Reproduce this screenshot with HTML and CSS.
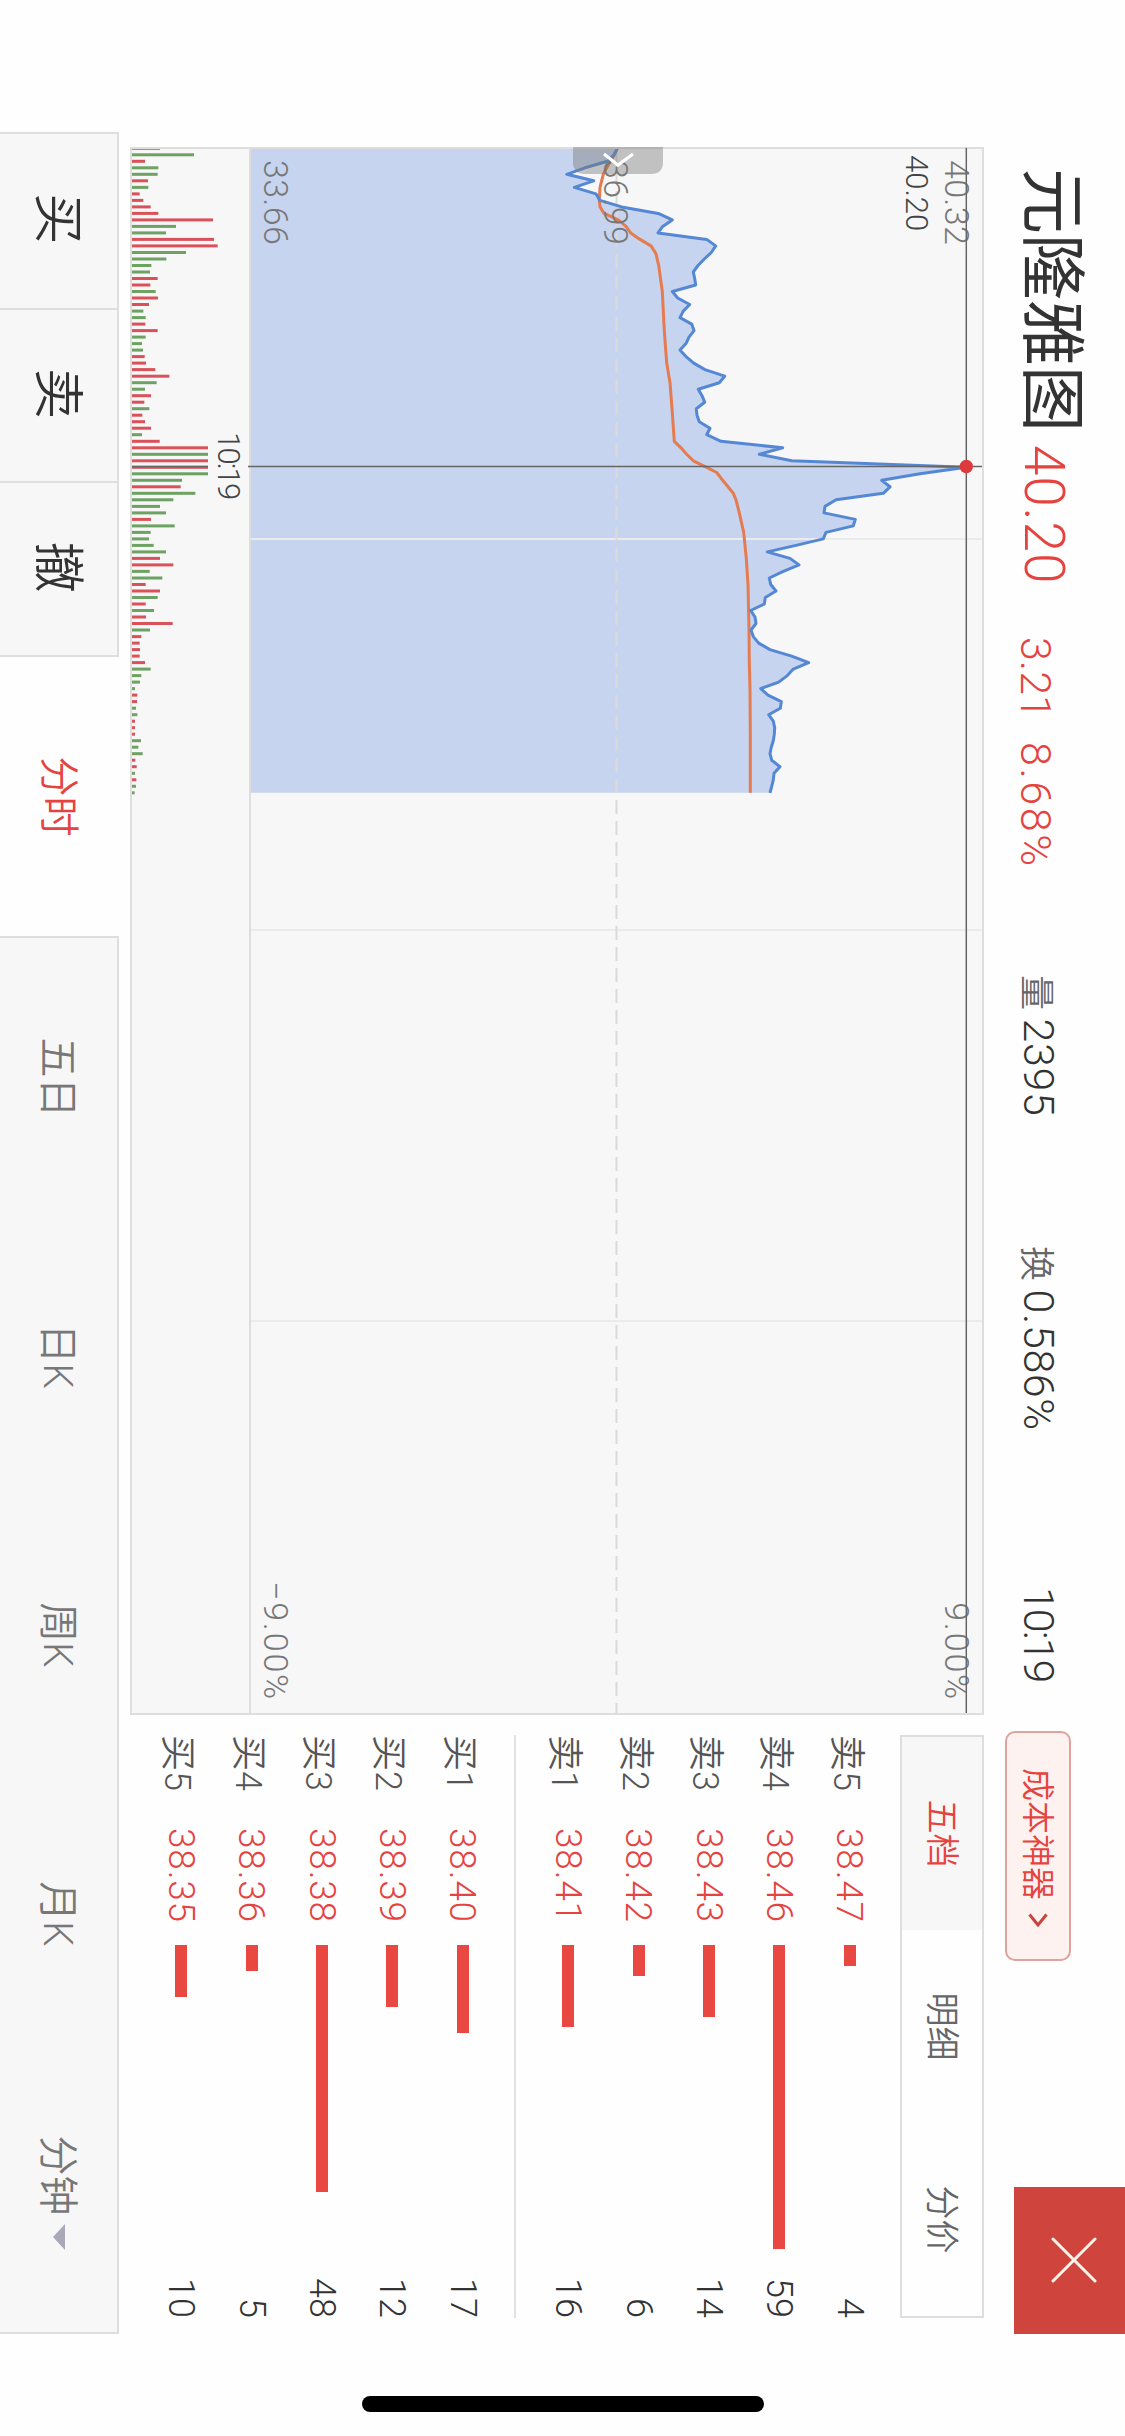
FILE: index.html
```html
<!DOCTYPE html>
<html lang="zh-CN">
<head>
    <meta charset="UTF-8">
    <meta name="viewport" content="width=device-width, initial-scale=1.0">
    <title>元隆雅图 分时</title>
    <link rel="stylesheet" href="styles.css">
</head>
<body>
    <div class="screen">
        <div class="landscape">
            <header class="quote">
                <h1 class="name">元隆雅图</h1>
                <div class="price">40.20</div>
                <div class="change">3.21</div>
                <div class="change percent">8.68%</div>
                <div class="stat"><span>量</span>2395</div>
                <div class="stat"><span>换</span>0.586%</div>
                <div class="stat time">10:19</div>
                <button class="cost-btn">成本神器
                    <svg width="14" height="20" viewBox="0 0 14 20"><path d="M1.5 1.5 L12 10 L1.5 18.5"/></svg>
                </button>
                <button class="close-btn">
                    <svg width="46" height="46" viewBox="0 0 46 46"><path d="M2 2 L44 44 M44 2 L2 44"/></svg>
                </button>
            </header>

            <main class="main">
                <svg class="chart" width="1568" height="855" viewBox="0 0 1568 855">
                    <rect class="chart-bg" x="1" y="1" width="1566" height="853"/>
                    <path id="area" class="area"/>
                    <path class="grid" d="M392 2 V733 M783 2 V733 M1174 2 V733"/>
                    <path class="mid" d="M2 367.5 H1566"/>
                    <path class="frame" d="M1 734 H1567"/>
                    <g id="volume"></g>
                    <path id="avg" class="avg"/>
                    <path id="line" class="line"/>
                    <rect class="frame" x="1" y="1" width="1566" height="852"/>

                    <text class="axis" x="13" y="39">40.32</text>
                    <text class="axis" x="13" y="380">36.99</text>
                    <text class="axis" x="13" y="720">33.66</text>
                    <text class="axis end" x="1554" y="39">9.00%</text>
                    <text class="axis end" x="1554" y="720">−9.00%</text>

                    <path class="cross" d="M1 17.7 H1566 M319.5 2 V852"/>
                    <circle class="dot" cx="319.5" cy="17.7" r="6.7"/>
                    <rect class="chart-bg" x="285" y="736" width="70" height="40"/>
                    <text class="tip" x="8" y="78">40.20</text>
                    <text class="tip time" x="285" y="766">10:19</text>

                    <path class="handle" d="M0 321 H15 Q27 321 27 333 V399 Q27 411 15 411 H0 Z"/>
                    <path class="handle-arrow" d="M7 351 L18 366 L7 380"/>
                </svg>

                <section class="panel">
                    <div class="panel-tabs">
                        <span class="active">五档</span>
                        <span>明细</span>
                        <span>分价</span>
                    </div>
                    <ul class="orders" id="sell"></ul>
                    <ul class="orders buy" id="buy"></ul>
                </section>

                <div class="home"></div>
            </main>

            <nav class="bottom">
                <div class="trade">
                    <button>买</button>
                    <button>卖</button>
                    <button>撤</button>
                </div>
                <div class="tab active">分时</div>
                <div class="periods">
                    <div class="tab">五日</div>
                    <div class="tab">日K</div>
                    <div class="tab">周K</div>
                    <div class="tab">月K</div>
                    <div class="tab">分钟<i class="caret"></i></div>
                </div>
            </nav>
        </div>
    </div>

    <script src="script.js"></script>
</body>
</html>
```

FILE: styles.css
```css
:root {
    --red: #e5433f;
    --text: #333;
    --gray: #777;
    --border: #dedede;
    --panel-bg: #f7f7f7;
}

* {
    box-sizing: border-box;
    margin: 0;
    padding: 0;
}

body {
    background: #fefefe;
    color: var(--text);
    font-family: Roboto, "Noto Sans CJK SC", sans-serif;
    font-weight: 350;
}

button {
    font: inherit;
    border: none;
    background: none;
}

.screen {
    width: 1125px;
    height: 2436px;
    overflow: hidden;
}

/* the whole page is shown in landscape */
.landscape {
    width: 2436px;
    height: 1125px;
    transform-origin: 0 0;
    transform: translateX(1125px) rotate(90deg);
    display: flex;
    flex-direction: column;
}

/* header */
.quote {
    height: 141px;
    padding-left: 168px;
    display: grid;
    grid-template-columns: 277px 192px 105px 233px 271px 341px 144px 456px 147px;
    align-items: start;
    line-height: 60px;
    white-space: nowrap;
}

.name {
    font-size: 66px;
    font-weight: 400;
    line-height: 66px;
    padding-top: 41px;
}

.price {
    padding-top: 51px;
    font-size: 55px;
    letter-spacing: 0.8px;
    color: var(--red);
}

.change {
    padding-top: 59px;
    font-size: 43px;
    color: var(--red);
}

.percent {
    letter-spacing: 2.6px;
}

.stat {
    padding-top: 56px;
    font-size: 43px;
    letter-spacing: 0.6px;
}

.stat span {
    font-size: 35px;
    color: #666;
    margin-right: 8px;
}

.stat.time {
    letter-spacing: -2px;
}

.cost-btn {
    width: 230px;
    height: 66px;
    margin-top: 54px;
    padding-left: 3px;
    border: 2px solid #dfa29d;
    border-radius: 10px;
    background: #fdf2ef;
    color: var(--red);
    font-size: 33px;
    line-height: 1;
    display: flex;
    align-items: center;
    justify-content: center;
    gap: 13px;
}

.cost-btn svg {
    fill: none;
    stroke: #c9443e;
    stroke-width: 3;
}

.close-btn {
    height: 111px;
    background: #cf453e;
    display: flex;
    align-items: center;
    justify-content: center;
    padding-right: 2px;
    padding-bottom: 10px;
}

.close-btn svg {
    fill: none;
    stroke: #fff4ea;
    stroke-width: 3;
    stroke-linecap: round;
}

/* chart */
.main {
    height: 865px;
    padding-left: 147px;
    display: flex;
}

.chart {
    flex: none;
    display: block;
}

.chart-bg {
    fill: var(--panel-bg);
}

.frame {
    fill: none;
    stroke: var(--border);
    stroke-width: 2;
}

.grid {
    stroke: #ebebeb;
    stroke-width: 2;
}

.mid {
    stroke: #dadada;
    stroke-width: 2;
    stroke-dasharray: 14 7;
}

.area {
    fill: #c6d4f0;
}

.line,
.avg {
    fill: none;
    stroke: #5588d4;
    stroke-width: 3;
    stroke-linejoin: round;
}

.avg {
    stroke: #e57b4f;
}

.up {
    fill: #d9525a;
}

.down {
    fill: #6da263;
}

.axis {
    font-size: 34px;
    font-weight: 300;
    letter-spacing: 0.3px;
    fill: #777;
}

.axis.end {
    text-anchor: end;
    letter-spacing: 1.8px;
}

.tip {
    font-size: 31px;
    fill: #444;
}

.tip.time {
    letter-spacing: -1.8px;
}

.cross {
    fill: none;
    stroke: #666;
    stroke-width: 1.5;
}

.dot {
    fill: #dc3a3c;
}

.handle {
    fill: rgba(120, 120, 120, 0.42);
}

.handle-arrow {
    fill: none;
    stroke: #fff;
    stroke-width: 3;
}

/* order book */
.panel {
    width: 583px;
    margin-left: 20px;
}

.panel-tabs {
    height: 84px;
    border: 2px solid var(--border);
    display: grid;
    grid-template-columns: repeat(3, 1fr);
    font-size: 34px;
    line-height: 80px;
    text-align: center;
    color: #666;
}

.panel-tabs .active {
    background: var(--panel-bg);
    color: var(--red);
}

.orders {
    list-style: none;
    padding: 15px 0 17px;
}

.buy {
    border-top: 2px solid #e2e2e2;
    padding-top: 16px;
}

.orders li {
    height: 70.4px;
    display: grid;
    grid-template-columns: 93px 117px 1fr 60px;
    align-items: center;
    font-size: 36px;
    white-space: nowrap;
}

.side {
    color: #555;
}

.cost {
    font-size: 37px;
    letter-spacing: 0.8px;
    color: var(--red);
}

.bar {
    height: 12px;
    background: #e84742;
}

.count {
    text-align: right;
}

.home {
    width: 16px;
    height: 402px;
    margin-left: 78px;
    margin-top: 220px;
    border-radius: 8px;
    background: #000;
}

/* bottom bar */
.bottom {
    height: 119px;
    padding-left: 132px;
    display: flex;
}

.trade {
    width: 525px;
    display: grid;
    grid-template-columns: repeat(3, 1fr);
    background: var(--panel-bg);
    border: 2px solid var(--border);
    border-bottom: none;
}

.trade button {
    font-size: 51px;
    color: var(--text);
    padding: 0 4px 8px 0;
}

.trade button + button {
    border-left: 2px solid var(--border);
}

.tab {
    width: 279px;
    display: flex;
    align-items: center;
    justify-content: center;
    padding-bottom: 6px;
    font-size: 40px;
    color: var(--gray);
}

.tab.active {
    color: var(--red);
}

.periods {
    width: 1398px;
    display: flex;
    background: var(--panel-bg);
    border: 2px solid var(--border);
    border-bottom: none;
}

.caret {
    margin-left: 8px;
    margin-top: 5px;
    border: 13px solid transparent;
    border-top: 12px solid #a9a9b9;
    border-bottom: none;
}
```

FILE: script.js
```javascript
const STEP = 6.51;
const LEFT = 1.3;
const BASE = 734;
const VOL_BASE = 852;

// price per minute, as height above the bottom of the price area (x3)
const prices = [
    1102, 1092, 1073, 1005, 950, 1031, 973, 1038, 1050, 1115, 1225, 1267, 1238, 1224, 1370, 1397,
    1384, 1363, 1344, 1330, 1334, 1337, 1267, 1283, 1319, 1300, 1290, 1325, 1332, 1317, 1308, 1290,
    1308, 1331, 1365, 1424, 1408, 1345, 1356, 1364, 1339, 1341, 1348, 1380, 1370, 1413, 1598, 1528,
    1625, 2149, 2010, 1895, 1920, 1900, 1758, 1725, 1722, 1816, 1810, 1728, 1720, 1638, 1552, 1620,
    1647, 1600, 1558, 1562, 1578, 1546, 1543, 1502, 1515, 1518, 1503, 1510, 1526, 1560, 1625, 1676,
    1630, 1612, 1586, 1532, 1554, 1594, 1591, 1556, 1570, 1574, 1573, 1570, 1564, 1560, 1565, 1590,
    1572, 1570, 1565, 1560
];

// average price: [minute, height x3]
const average = [
    [0, 1102], [1.3, 1090], [3, 1070], [4, 1060], [6, 1050], [8, 1048], [9, 1050], [10, 1062],
    [11, 1105], [12, 1128], [13, 1142], [14, 1170], [15, 1203], [16.2, 1218], [18, 1226], [22, 1237],
    [28, 1243], [33, 1250], [36, 1260], [40, 1266], [45, 1273], [46, 1293], [47, 1310], [48, 1330],
    [49, 1370], [49.8, 1400], [51, 1418], [53, 1450], [54, 1458], [56, 1468], [59, 1481], [63, 1489],
    [67, 1494], [74, 1497], [79, 1498], [83, 1500], [90, 1501], [99, 1501]
];

const volumes = ('r84 g186 r39 g79 g77 r48 g49 r23 r34 r56 r79 r243 g132 g102 r246 r257 g162 g103 g58 g54 ' +
    'r77 r55 g71 r78 r51 g34 g41 r40 r77 g41 g30 g33 r38 r42 r70 r112 g74 g39 r57 r37 ' +
    'g52 r31 r39 r57 g30 r83 r240 g240 r240 r240 g240 g150 r146 g190 g124 g84 g102 r57 g128 g56 ' +
    'g51 g65 g102 r84 r124 g53 g91 r41 r84 g77 r41 g66 r42 r122 g54 r28 r23 r24 r23 r39 ' +
    'g56 g28 g24 g9 r16 r15 g12 g16 r9 r9 r9 g27 g19 g32 r10 r14 g9 r13 g12 g8').split(' ');

const sell = [['卖5', '38.47', 4], ['卖4', '38.46', 59], ['卖3', '38.43', 14], ['卖2', '38.42', 6], ['卖1', '38.41', 16]];
const buy = [['买1', '38.40', 17], ['买2', '38.39', 12], ['买3', '38.38', 48], ['买4', '38.36', 5], ['买5', '38.35', 10]];

function point(i, h) {
    return (LEFT + i * STEP).toFixed(1) + ' ' + (BASE - h / 3).toFixed(1);
}

const linePath = 'M' + prices.map((h, i) => point(i, h)).join(' L');
document.getElementById('line').setAttribute('d', linePath);
document.getElementById('area').setAttribute('d', linePath + ' V' + BASE + ' H' + LEFT + ' Z');
document.getElementById('avg').setAttribute('d', 'M' + average.map(p => point(p[0], p[1])).join(' L'));

document.getElementById('volume').innerHTML = volumes.map((v, i) => {
    const h = v.slice(1) / 3;
    const x = LEFT + i * STEP - 1.5;
    return `<rect class="${v[0] === 'r' ? 'up' : 'down'}" x="${x.toFixed(1)}" y="${VOL_BASE - h}" width="3" height="${h}"/>`;
}).join('');

function renderOrders(id, rows) {
    document.getElementById(id).innerHTML = rows.map(row => `
        <li>
            <span class="side">${row[0]}</span>
            <span class="cost">${row[1]}</span>
            <div class="bar" style="width: ${row[2] * 5.15}px"></div>
            <span class="count">${row[2]}</span>
        </li>`).join('');
}

renderOrders('sell', sell);
renderOrders('buy', buy);
```
